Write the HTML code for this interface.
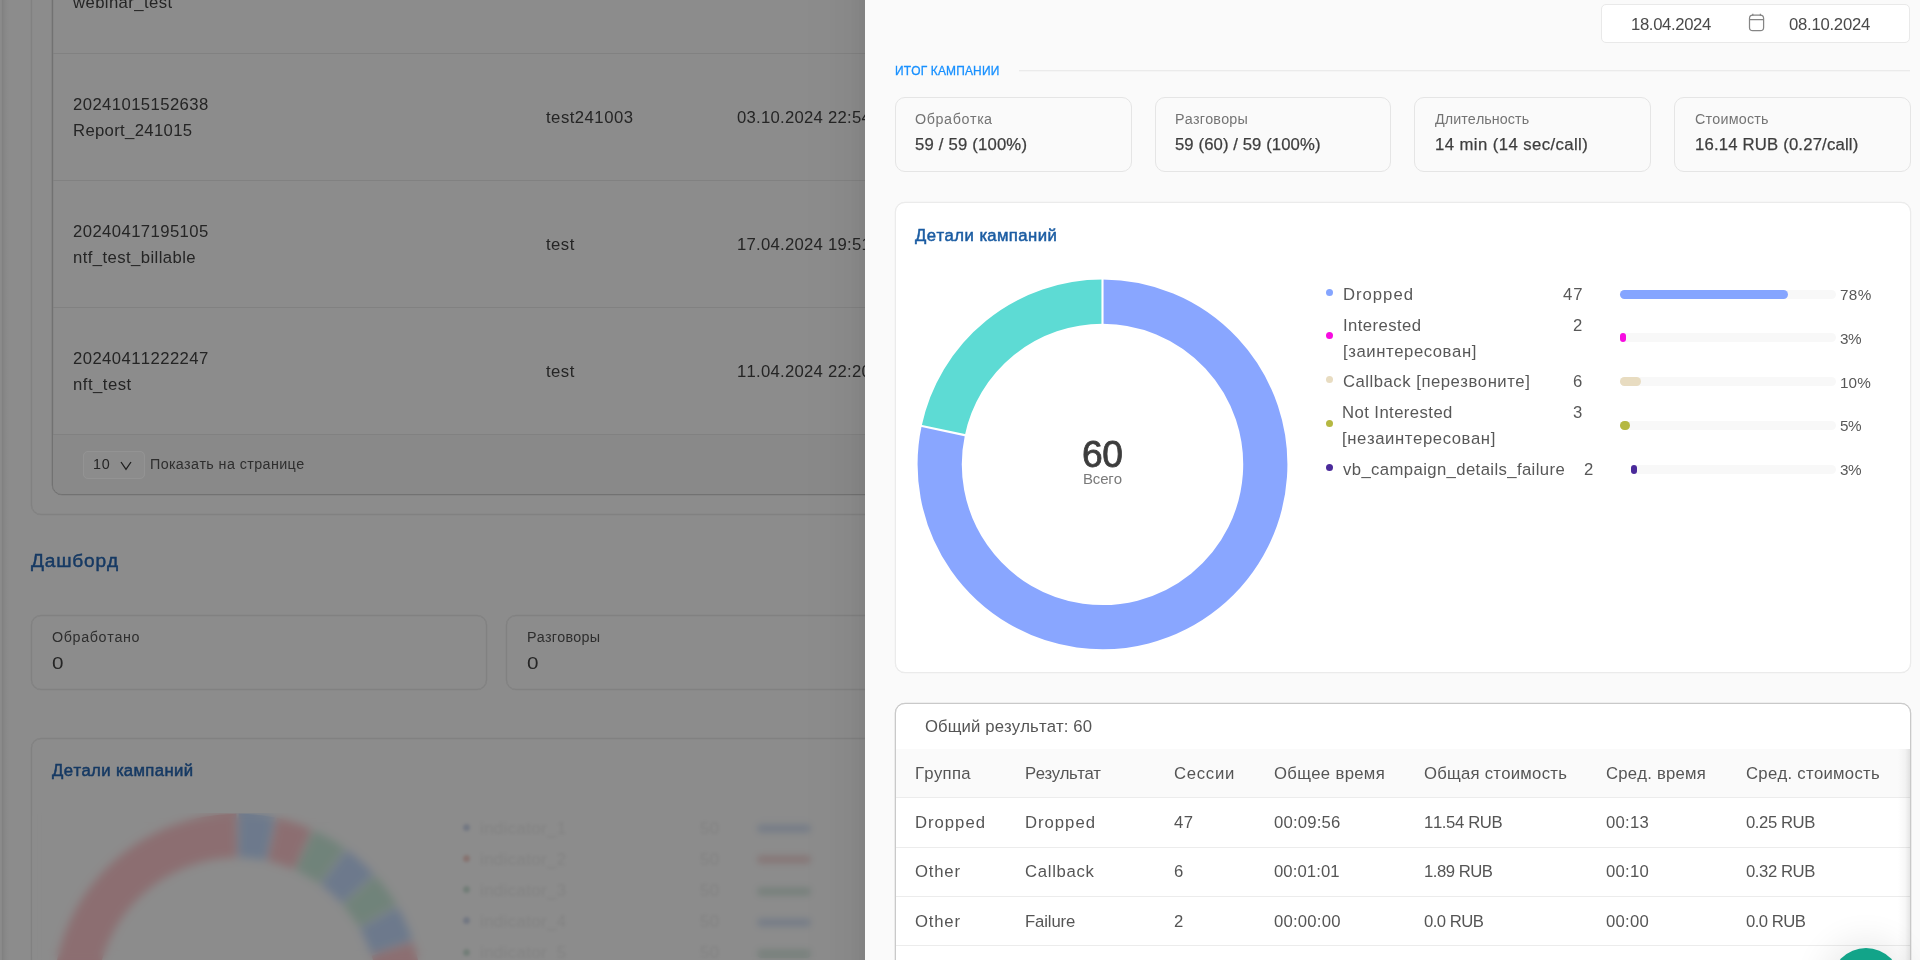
<!DOCTYPE html>
<html lang="ru"><head><meta charset="utf-8"><title>Dashboard</title>
<style>
html,body{margin:0;padding:0;}
body{width:1920px;height:960px;overflow:hidden;position:relative;background:#fff;font-family:"Liberation Sans",sans-serif;font-kerning:none;}
.t{position:absolute;white-space:nowrap;line-height:20px;height:20px;will-change:transform;}
.b{position:absolute;box-sizing:border-box;}
#page,#mask{position:absolute;top:0;height:960px;overflow:hidden;}
#page{left:0;width:1920px;background:#fff;}
#mask{left:0;width:1920px;background:rgba(0,0,0,.45);}
</style></head><body>
<div id="page">
<div class="b" style="left:31px;top:-30px;width:1700px;height:545px;border:1px solid #ebebeb;border-radius:10px;box-shadow:0 0 0 .3px #ebebeb,inset 0 0 0 .2px #ebebeb;"></div>
<div class="b" style="left:52px;top:-30px;width:1650px;height:525px;border:1px solid #d0d0d0;border-radius:10px;box-shadow:0 0 0 .3px #d0d0d0,inset 0 0 0 .2px #d0d0d0;"></div>
<div class="b" style="left:53px;top:53.0px;width:1600px;height:1px;background:#ececec;"></div>
<div class="b" style="left:53px;top:180.0px;width:1600px;height:1px;background:#ececec;"></div>
<div class="b" style="left:53px;top:307.0px;width:1600px;height:1px;background:#ececec;"></div>
<div class="b" style="left:53px;top:434.0px;width:1600px;height:1px;background:#ececec;"></div>
<div class="b" style="left:53px;top:435px;width:1649px;height:59px;background:#f9f9f9;border-radius:0 0 9px 9px;"></div>
<div class="t" style="left:73.34px;top:-7.00px;font-size:16.71px;color:#444;letter-spacing:0.401px;">webinar_test</div>
<div class="t" style="left:73.30px;top:95.00px;font-size:16.71px;color:#444;letter-spacing:0.408px;">20241015152638</div>
<div class="t" style="left:73.30px;top:121.00px;font-size:16.71px;color:#444;letter-spacing:0.334px;">Report_241015</div>
<div class="t" style="left:546.25px;top:108.00px;font-size:16.71px;color:#444;letter-spacing:0.486px;">test241003</div>
<div class="t" style="left:737.00px;top:108.00px;font-size:16.71px;color:#444;letter-spacing:0.262px;">03.10.2024 22:54</div>
<div class="t" style="left:73.30px;top:222.00px;font-size:16.71px;color:#444;letter-spacing:0.408px;">20240417195105</div>
<div class="t" style="left:73.30px;top:248.00px;font-size:16.71px;color:#444;letter-spacing:0.412px;">ntf_test_billable</div>
<div class="t" style="left:546.25px;top:235.00px;font-size:16.71px;color:#444;letter-spacing:0.474px;">test</div>
<div class="t" style="left:737.00px;top:235.00px;font-size:16.71px;color:#444;letter-spacing:0.262px;">17.04.2024 19:51</div>
<div class="t" style="left:73.30px;top:349.00px;font-size:16.71px;color:#444;letter-spacing:0.408px;">20240411222247</div>
<div class="t" style="left:73.30px;top:375.00px;font-size:16.71px;color:#444;letter-spacing:0.485px;">nft_test</div>
<div class="t" style="left:546.25px;top:362.00px;font-size:16.71px;color:#444;letter-spacing:0.474px;">test</div>
<div class="t" style="left:737.00px;top:362.00px;font-size:16.71px;color:#444;letter-spacing:0.262px;">11.04.2024 22:20</div>
<div class="b" style="left:83px;top:450.5px;width:61.5px;height:28px;border-radius:5px;background:#fff;"></div>
<div class="t" style="left:92.70px;top:454.00px;font-size:14.32px;color:#444;letter-spacing:0.788px;">10</div>
<svg class="b" style="left:119px;top:460px" width="14" height="12" viewBox="0 0 14 12"><path d="M2 2 L7 9.3 L12 2" fill="none" stroke="#3a3a3a" stroke-width="1.3"/></svg>
<div class="t" style="left:150.40px;top:454.00px;font-size:14.32px;color:#555;letter-spacing:0.402px;">Показать на странице</div>
<div class="t" style="left:31.25px;top:551.00px;font-size:19.1px;color:#2868b4;letter-spacing:0.809px;-webkit-text-stroke:0.45px #2868b4;">Дашборд</div>
<div class="b" style="left:31px;top:615px;width:455.5px;height:74.5px;border:1px solid #ebebeb;border-radius:10px;box-shadow:0 0 0 .3px #ebebeb,inset 0 0 0 .2px #ebebeb;"></div>
<div class="b" style="left:506px;top:615px;width:455.5px;height:74.5px;border:1px solid #ebebeb;border-radius:10px;box-shadow:0 0 0 .3px #ebebeb,inset 0 0 0 .2px #ebebeb;"></div>
<div class="t" style="left:52.00px;top:627.00px;font-size:14.32px;color:#555;letter-spacing:0.632px;">Обработано</div>
<div class="t" style="left:52.00px;top:653.00px;font-size:17.19px;color:#444;transform:scaleX(1.2);transform-origin:0 0;">0</div>
<div class="t" style="left:527.00px;top:627.00px;font-size:14.32px;color:#555;letter-spacing:0.235px;">Разговоры</div>
<div class="t" style="left:527.00px;top:653.00px;font-size:17.19px;color:#444;transform:scaleX(1.2);transform-origin:0 0;">0</div>
<div class="b" style="left:31px;top:737.5px;width:1700px;height:400px;border:1px solid #ebebeb;border-radius:10px;box-shadow:0 0 0 .3px #ebebeb,inset 0 0 0 .2px #ebebeb;"></div>
<div class="t" style="left:51.75px;top:761.00px;font-size:16.71px;color:#2868b4;letter-spacing:0.404px;-webkit-text-stroke:0.5px #2868b4;">Детали кампаний</div>
<svg class="b" style="left:31px;top:800px" width="420" height="170" viewBox="31 800 420 170"><path d="M238.49 835.60 A162.6 162.6 0 0 1 270.33 838.95" fill="none" stroke="#c6ddff" stroke-width="43.7"/><path d="M272.28 839.36 A162.6 162.6 0 0 1 302.73 849.26" fill="none" stroke="#ffc9ce" stroke-width="43.7"/><path d="M304.54 850.06 A162.6 162.6 0 0 1 332.27 866.07" fill="none" stroke="#cdeede" stroke-width="43.7"/><path d="M333.88 867.24 A162.6 162.6 0 0 1 357.67 888.66" fill="none" stroke="#c6ddff" stroke-width="43.7"/><path d="M359.00 890.14 A162.6 162.6 0 0 1 377.82 916.04" fill="none" stroke="#cdeede" stroke-width="43.7"/><path d="M378.81 917.76 A162.6 162.6 0 0 1 391.83 947.01" fill="none" stroke="#c6ddff" stroke-width="43.7"/><path d="M392.45 948.90 A162.6 162.6 0 0 1 399.31 1014.21" fill="none" stroke="#ffc9ce" stroke-width="43.7"/><path d="M399.10 1016.18 A162.6 162.6 0 1 1 236.51 835.60" fill="none" stroke="#ffc9ce" stroke-width="43.7"/></svg>
<div class="b" style="left:462.5px;top:823.5px;width:7px;height:7px;border-radius:4px;background:#d3dbee;"></div>
<div class="t" style="left:480.00px;top:819.00px;font-size:16.71px;color:#ededed;letter-spacing:0.427px;">indicator_1</div>
<div class="t" style="left:700.00px;top:819.00px;font-size:16.71px;color:#ededed;letter-spacing:0.432px;">50</div>
<div class="b" style="left:757px;top:824.1px;width:53.5px;height:9px;border-radius:5px;background:#dbe6f7;"></div>
<div class="b" style="left:462.5px;top:854.75px;width:7px;height:7px;border-radius:4px;background:#f6d3cd;"></div>
<div class="t" style="left:480.00px;top:850.00px;font-size:16.71px;color:#ededed;letter-spacing:0.427px;">indicator_2</div>
<div class="t" style="left:700.00px;top:850.00px;font-size:16.71px;color:#ededed;letter-spacing:0.432px;">50</div>
<div class="b" style="left:757px;top:855.35px;width:53.5px;height:9px;border-radius:5px;background:#f5dcdc;"></div>
<div class="b" style="left:462.5px;top:886.0px;width:7px;height:7px;border-radius:4px;background:#d3e6dc;"></div>
<div class="t" style="left:480.00px;top:881.00px;font-size:16.71px;color:#ededed;letter-spacing:0.427px;">indicator_3</div>
<div class="t" style="left:700.00px;top:881.00px;font-size:16.71px;color:#ededed;letter-spacing:0.432px;">50</div>
<div class="b" style="left:757px;top:886.6px;width:53.5px;height:9px;border-radius:5px;background:#dcebe4;"></div>
<div class="b" style="left:462.5px;top:917.25px;width:7px;height:7px;border-radius:4px;background:#d3dbee;"></div>
<div class="t" style="left:480.00px;top:912.00px;font-size:16.71px;color:#ededed;letter-spacing:0.427px;">indicator_4</div>
<div class="t" style="left:700.00px;top:912.00px;font-size:16.71px;color:#ededed;letter-spacing:0.432px;">50</div>
<div class="b" style="left:757px;top:917.85px;width:53.5px;height:9px;border-radius:5px;background:#dbe6f7;"></div>
<div class="b" style="left:462.5px;top:948.5px;width:7px;height:7px;border-radius:4px;background:#d3e6dc;"></div>
<div class="t" style="left:480.00px;top:943.00px;font-size:16.71px;color:#ededed;letter-spacing:0.427px;">indicator_5</div>
<div class="t" style="left:700.00px;top:943.00px;font-size:16.71px;color:#ededed;letter-spacing:0.432px;">50</div>
<div class="b" style="left:757px;top:949.1px;width:53.5px;height:9px;border-radius:5px;background:#dcebe4;"></div>
<div class="b" style="left:32px;top:813.2px;width:420px;height:150px;-webkit-backdrop-filter:blur(5px);backdrop-filter:blur(5px);background:rgba(255,255,255,.01);"></div>
<div class="b" style="left:452px;top:813.2px;width:288px;height:150px;-webkit-backdrop-filter:blur(1.7px);backdrop-filter:blur(1.7px);background:rgba(255,255,255,.01);"></div>
<div class="b" style="left:740px;top:813.2px;width:125px;height:150px;-webkit-backdrop-filter:blur(3px);backdrop-filter:blur(3px);background:rgba(255,255,255,.01);"></div>
<div class="b" style="left:0px;top:0px;width:9px;height:960px;background:linear-gradient(90deg,rgba(0,0,0,.008) 0,rgba(0,0,0,.012) 14%,rgba(0,0,0,.075) 28%,rgba(0,0,0,.045) 48%,rgba(0,0,0,.015) 75%,rgba(0,0,0,0) 100%);"></div>
</div>
<div id="mask"></div>
<div class="b" style="left:83px;top:450.5px;width:61.5px;height:28px;border:1px solid #939393;border-radius:5px;"></div>
<div class="b" style="left:865px;top:-100px;width:1200px;height:1160px;background:#fafafa;box-shadow:-7.5px 0 20px -10px rgba(0,0,0,.08),-11px 0 35px 0 rgba(0,0,0,.05),-15px 0 60px 20px rgba(0,0,0,.03);"></div>
<div class="b" style="left:1601px;top:4px;width:309px;height:39px;background:#fff;border:1px solid #e9e9e9;border-radius:5px;"></div>
<div class="t" style="left:1630.70px;top:15.00px;font-size:16.71px;color:#4a4a4a;letter-spacing:-0.357px;">18.04.2024</div>
<div class="t" style="left:1789.00px;top:15.00px;font-size:16.71px;color:#4a4a4a;letter-spacing:-0.257px;">08.10.2024</div>
<svg class="b" style="left:1748px;top:13.5px;overflow:visible" width="17" height="18" viewBox="0 0 17 18"><rect x="1.5" y="1.2" width="14.1" height="15.5" rx="3.2" fill="none" stroke="#858585" stroke-width="1.25"/><path d="M1.5 5.6H15.6M4.8 -0.2V1.8M12.4 -0.2V1.8" stroke="#858585" stroke-width="1.25" fill="none"/></svg>
<div class="t" style="left:894.50px;top:61.00px;font-size:11.94px;color:#1890ff;letter-spacing:0.174px;-webkit-text-stroke:0.3px #1890ff;">ИТОГ КАМПАНИИ</div>
<div class="b" style="left:1019px;top:70px;width:891px;height:2px;background:linear-gradient(#ebebeb 50%,rgba(235,235,235,.35) 50%);"></div>
<div class="b" style="left:895px;top:97px;width:236.7px;height:74.5px;border:1px solid #e5e5e5;border-radius:10px;background:#fafafa;"></div>
<div class="t" style="left:915.40px;top:109.00px;font-size:14.32px;color:#747474;letter-spacing:0.607px;">Обработка</div>
<div class="t" style="left:915.40px;top:135.00px;font-size:16.71px;color:#3e3e3e;letter-spacing:0.192px;-webkit-text-stroke:0.25px #3e3e3e;">59 / 59 (100%)</div>
<div class="b" style="left:1154.7px;top:97px;width:236.7px;height:74.5px;border:1px solid #e5e5e5;border-radius:10px;background:#fafafa;"></div>
<div class="t" style="left:1175.10px;top:109.00px;font-size:14.32px;color:#747474;letter-spacing:0.223px;">Разговоры</div>
<div class="t" style="left:1175.10px;top:135.00px;font-size:16.71px;color:#3e3e3e;letter-spacing:0.094px;-webkit-text-stroke:0.25px #3e3e3e;">59 (60) / 59 (100%)</div>
<div class="b" style="left:1414.4px;top:97px;width:236.7px;height:74.5px;border:1px solid #e5e5e5;border-radius:10px;background:#fafafa;"></div>
<div class="t" style="left:1434.80px;top:109.00px;font-size:14.32px;color:#747474;letter-spacing:0.070px;">Длительность</div>
<div class="t" style="left:1434.80px;top:135.00px;font-size:16.71px;color:#3e3e3e;letter-spacing:0.428px;-webkit-text-stroke:0.25px #3e3e3e;">14 min (14 sec/call)</div>
<div class="b" style="left:1674.1px;top:97px;width:236.7px;height:74.5px;border:1px solid #e5e5e5;border-radius:10px;background:#fafafa;"></div>
<div class="t" style="left:1694.50px;top:109.00px;font-size:14.32px;color:#747474;letter-spacing:0.208px;">Стоимость</div>
<div class="t" style="left:1694.50px;top:135.00px;font-size:16.71px;color:#3e3e3e;letter-spacing:0.188px;-webkit-text-stroke:0.25px #3e3e3e;">16.14 RUB (0.27/call)</div>
<div class="b" style="left:895px;top:202px;width:1016px;height:470.6px;background:#fff;border:1px solid #ebebeb;border-radius:10px;box-shadow:0 0 0 .25px #ebebeb;"></div>
<div class="t" style="left:915.00px;top:226.00px;font-size:16.71px;color:#1b5ca2;letter-spacing:0.457px;-webkit-text-stroke:0.5px #1b5ca2;">Детали кампаний</div>
<svg class="b" style="left:895px;top:260px" width="420" height="410" viewBox="895 260 420 410"><path d="M1102.50 301.60 A162.8 162.8 0 1 1 943.26 430.55" fill="none" stroke="#89a6ff" stroke-width="44.2"/><path d="M943.26 430.55 A162.8 162.8 0 0 1 1102.50 301.60" fill="none" stroke="#5ddbd4" stroke-width="44.2"/><path d="M1102.50 324.70L1102.50 278.50" stroke="#fff" stroke-width="2.1"/><path d="M965.85 435.35L920.66 425.75" stroke="#fff" stroke-width="2.1"/></svg>
<div class="t" style="left:1081.60px;top:444.00px;font-size:37.2px;color:#3c3c3c;letter-spacing:-0.550px;-webkit-text-stroke:0.8px #404040;">60</div>
<div class="t" style="left:1082.60px;top:469.00px;font-size:15px;color:#7a7a7a;letter-spacing:-0.161px;">Всего</div>
<div class="b" style="left:1326.0px;top:288.5px;width:7px;height:7px;border-radius:4px;background:#85a5ff;"></div>
<div class="t" style="left:1343.00px;top:285.00px;font-size:16.71px;color:#585858;letter-spacing:0.987px;">Dropped</div>
<div class="t" style="left:1563.05px;top:285.00px;font-size:16.71px;color:#585858;letter-spacing:0.878px;">47</div>
<div class="b" style="left:1619.5px;top:289.5px;width:216.0px;height:9px;border-radius:5px;background:#f8f8f8;"><div style="width:168.5px;height:9px;border-radius:5px;background:#85a5ff"></div></div>
<div class="t" style="left:1840.00px;top:285.00px;font-size:15.28px;color:#585858;letter-spacing:0.327px;">78%</div>
<div class="b" style="left:1326.0px;top:332.25px;width:7px;height:7px;border-radius:4px;background:#f70ce0;"></div>
<div class="t" style="left:1343.00px;top:316.00px;font-size:16.71px;color:#585858;letter-spacing:0.411px;">Interested</div>
<div class="t" style="left:1343.00px;top:342.00px;font-size:16.71px;color:#585858;letter-spacing:0.580px;">[заинтересован]</div>
<div class="t" style="left:1572.79px;top:316.00px;font-size:16.71px;color:#585858;letter-spacing:0.438px;">2</div>
<div class="b" style="left:1619.5px;top:333.25px;width:216.0px;height:9px;border-radius:5px;background:#f8f8f8;"><div style="width:6.5px;height:9px;border-radius:5px;background:#f70ce0"></div></div>
<div class="t" style="left:1840.00px;top:329.00px;font-size:15.28px;color:#585858;letter-spacing:-0.550px;">3%</div>
<div class="b" style="left:1326.0px;top:376.0px;width:7px;height:7px;border-radius:4px;background:#e8dcc1;"></div>
<div class="t" style="left:1343.00px;top:372.00px;font-size:16.71px;color:#585858;letter-spacing:0.511px;">Callback [перезвоните]</div>
<div class="t" style="left:1572.79px;top:372.00px;font-size:16.71px;color:#585858;letter-spacing:0.438px;">6</div>
<div class="b" style="left:1619.5px;top:377.0px;width:216.0px;height:9px;border-radius:5px;background:#f8f8f8;"><div style="width:21.6px;height:9px;border-radius:5px;background:#e8dcc1"></div></div>
<div class="t" style="left:1840.00px;top:373.00px;font-size:15.28px;color:#585858;letter-spacing:0.077px;">10%</div>
<div class="b" style="left:1325.5px;top:419.75px;width:7px;height:7px;border-radius:4px;background:#b5b842;"></div>
<div class="t" style="left:1341.50px;top:403.00px;font-size:16.71px;color:#585858;letter-spacing:0.427px;">Not Interested</div>
<div class="t" style="left:1341.50px;top:429.00px;font-size:16.71px;color:#585858;letter-spacing:0.600px;">[незаинтересован]</div>
<div class="t" style="left:1572.79px;top:403.00px;font-size:16.71px;color:#585858;letter-spacing:0.438px;">3</div>
<div class="b" style="left:1619.5px;top:420.75px;width:216.0px;height:9px;border-radius:5px;background:#f8f8f8;"><div style="width:10.8px;height:9px;border-radius:5px;background:#b5b842"></div></div>
<div class="t" style="left:1840.00px;top:416.00px;font-size:15.28px;color:#585858;letter-spacing:-0.550px;">5%</div>
<div class="b" style="left:1326.0px;top:463.5px;width:7px;height:7px;border-radius:4px;background:#4a2a9a;"></div>
<div class="t" style="left:1343.00px;top:460.00px;font-size:16.71px;color:#585858;letter-spacing:0.393px;">vb_campaign_details_failure</div>
<div class="t" style="left:1584.29px;top:460.00px;font-size:16.71px;color:#585858;letter-spacing:0.438px;">2</div>
<div class="b" style="left:1631px;top:464.5px;width:204.5px;height:9px;border-radius:5px;background:#f8f8f8;"><div style="width:6.1px;height:9px;border-radius:5px;background:#4a2a9a"></div></div>
<div class="t" style="left:1840.00px;top:460.00px;font-size:15.28px;color:#585858;letter-spacing:-0.550px;">3%</div>
<div class="b" style="left:895px;top:703px;width:1016px;height:300px;background:#fff;border:1px solid #c9c9c9;border-radius:10px;box-shadow:0 0 0 .3px #c9c9c9;"></div>
<div class="t" style="left:925.30px;top:717.00px;font-size:16.71px;color:#555;letter-spacing:0.114px;">Общий результат: 60</div>
<div class="b" style="left:896px;top:749px;width:1014px;height:48.2px;background:#fafafa;"></div>
<div class="t" style="left:915.30px;top:764.00px;font-size:16.71px;color:#555;letter-spacing:0.318px;">Группа</div>
<div class="t" style="left:1025.00px;top:764.00px;font-size:16.71px;color:#555;letter-spacing:-0.438px;">Результат</div>
<div class="t" style="left:1174.40px;top:764.00px;font-size:16.71px;color:#555;letter-spacing:0.716px;">Сессии</div>
<div class="t" style="left:1273.75px;top:764.00px;font-size:16.71px;color:#555;letter-spacing:0.328px;">Общее время</div>
<div class="t" style="left:1424.00px;top:764.00px;font-size:16.71px;color:#555;letter-spacing:0.256px;">Общая стоимость</div>
<div class="t" style="left:1606.25px;top:764.00px;font-size:16.71px;color:#555;letter-spacing:0.229px;">Сред. время</div>
<div class="t" style="left:1745.60px;top:764.00px;font-size:16.71px;color:#555;letter-spacing:0.285px;">Сред. стоимость</div>
<div class="t" style="left:915.30px;top:813.00px;font-size:16.71px;color:#555;letter-spacing:0.987px;">Dropped</div>
<div class="t" style="left:1025.00px;top:813.00px;font-size:16.71px;color:#555;letter-spacing:0.987px;">Dropped</div>
<div class="t" style="left:1174.40px;top:813.00px;font-size:16.71px;color:#555;letter-spacing:0.432px;">47</div>
<div class="t" style="left:1273.75px;top:813.00px;font-size:16.71px;color:#555;letter-spacing:0.175px;">00:09:56</div>
<div class="t" style="left:1424.00px;top:813.00px;font-size:16.71px;color:#555;letter-spacing:-0.369px;">11.54 RUB</div>
<div class="t" style="left:1606.25px;top:813.00px;font-size:16.71px;color:#555;letter-spacing:0.238px;">00:13</div>
<div class="t" style="left:1745.60px;top:813.00px;font-size:16.71px;color:#555;letter-spacing:-0.437px;">0.25 RUB</div>
<div class="t" style="left:915.30px;top:862.00px;font-size:16.71px;color:#555;letter-spacing:0.804px;">Other</div>
<div class="t" style="left:1025.00px;top:862.00px;font-size:16.71px;color:#555;letter-spacing:0.696px;">Callback</div>
<div class="t" style="left:1174.40px;top:862.00px;font-size:16.71px;color:#555;">6</div>
<div class="t" style="left:1273.75px;top:862.00px;font-size:16.71px;color:#555;letter-spacing:0.089px;">00:01:01</div>
<div class="t" style="left:1424.00px;top:862.00px;font-size:16.71px;color:#555;letter-spacing:-0.494px;">1.89 RUB</div>
<div class="t" style="left:1606.25px;top:862.00px;font-size:16.71px;color:#555;letter-spacing:0.238px;">00:10</div>
<div class="t" style="left:1745.60px;top:862.00px;font-size:16.71px;color:#555;letter-spacing:-0.437px;">0.32 RUB</div>
<div class="t" style="left:915.30px;top:912.00px;font-size:16.71px;color:#555;letter-spacing:0.804px;">Other</div>
<div class="t" style="left:1025.00px;top:912.00px;font-size:16.71px;color:#555;letter-spacing:-0.126px;">Failure</div>
<div class="t" style="left:1174.40px;top:912.00px;font-size:16.71px;color:#555;">2</div>
<div class="t" style="left:1273.75px;top:912.00px;font-size:16.71px;color:#555;letter-spacing:0.217px;">00:00:00</div>
<div class="t" style="left:1424.00px;top:912.00px;font-size:16.71px;color:#555;letter-spacing:-0.550px;">0.0 RUB</div>
<div class="t" style="left:1606.25px;top:912.00px;font-size:16.71px;color:#555;letter-spacing:0.238px;">00:00</div>
<div class="t" style="left:1745.60px;top:912.00px;font-size:16.71px;color:#555;letter-spacing:-0.550px;">0.0 RUB</div>
<div class="b" style="left:896px;top:797px;width:1014px;height:1px;background:#ececec;"></div>
<div class="b" style="left:896px;top:846.9px;width:1014px;height:1px;background:#ececec;"></div>
<div class="b" style="left:896px;top:895.6px;width:1014px;height:1px;background:#ececec;"></div>
<div class="b" style="left:896px;top:945.3px;width:1014px;height:1px;background:#ececec;"></div>
<div class="b" style="left:1898px;top:749px;width:12px;height:211px;background:linear-gradient(90deg,rgba(0,0,0,0),rgba(0,0,0,.03) 60%,rgba(0,0,0,.10));"></div>
<div class="b" style="left:1830.5px;top:948px;width:70px;height:70px;border-radius:35px;background:#12a489;box-shadow:0 0 32px 10px rgba(0,0,0,.075);"></div>
</body></html>
